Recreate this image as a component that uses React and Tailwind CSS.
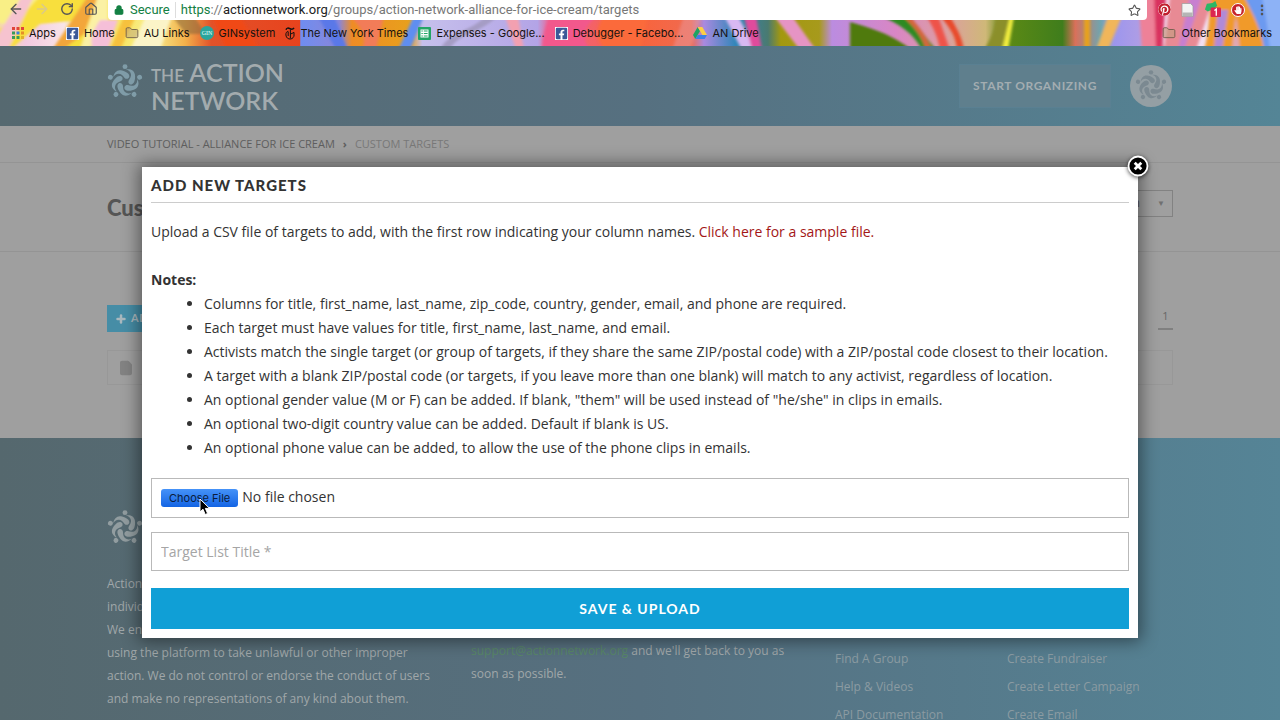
import React from "react";
import { ArrowLeft, ArrowRight, RotateCw, Home, Star, Lock, Folder, EllipsisVertical, Plus, File } from "lucide-react";
import { FaFacebookSquare, FaPinterest, FaHandPaper } from "react-icons/fa";

const FIGURE_ANGLES = [0, 72, 144, 216, 288];

function Swirl({ className }) {
  return (
    <svg viewBox="-19 -19 38 38" className={className} fill="currentColor" aria-hidden="true">
      {FIGURE_ANGLES.map((a) => (
        <g key={a} transform={`rotate(${a})`}>
          <circle cx="0" cy="-16.200" r="2.600" />
          <path d="M-12.300-5C-11.800-9.800-8.500-13-4.500-12.400C-.8-11.900 4.400-9.600 4.600-6.400C4.700-3.600 1.600-2.400-.4-4.300C-2-6-3.400-8.300-6.200-8.600C-9-8.800-11-7.400-12.300-5Z" />
        </g>
      ))}
    </svg>
  );
}

function Logo({ markClass }) {
  return (
    <a href="#home" className="flex items-center gap-2 font-['Lato',sans-serif] text-[#a3abae]">
      <Swirl className={markClass} />
      <span className="flex flex-col text-[25px] font-semibold leading-[25px]">
        <span><span className="text-[17px]">THE</span> ACTION</span>
        <span>NETWORK</span>
      </span>
    </a>
  );
}

function ThemeArt() {
  return (
    <svg className="absolute inset-0 h-full w-full" viewBox="0 0 1280 46" preserveAspectRatio="none" aria-hidden="true">
      <defs>
        <linearGradient id="paint" x1="0" x2="1280" gradientUnits="userSpaceOnUse">
          <stop offset="0" stopColor="#f6d9a8" /><stop offset=".02" stopColor="#f3c9e0" />
          <stop offset=".05" stopColor="#f8e4e8" /><stop offset=".065" stopColor="#f7e23c" />
          <stop offset=".12" stopColor="#f9ec8c" /><stop offset=".145" stopColor="#f3b04a" />
          <stop offset=".165" stopColor="#e2522a" /><stop offset=".234" stopColor="#e8431d" />
          <stop offset=".235" stopColor="#6f8df0" /><stop offset=".265" stopColor="#8a86d8" />
          <stop offset=".275" stopColor="#ef8c25" /><stop offset=".32" stopColor="#e8a01c" />
          <stop offset=".33" stopColor="#c6c0ec" /><stop offset=".42" stopColor="#b3a4e6" />
          <stop offset=".43" stopColor="#f0608c" /><stop offset=".5" stopColor="#f8643c" />
          <stop offset=".54" stopColor="#f06a50" /><stop offset=".55" stopColor="#a98ae0" />
          <stop offset=".575" stopColor="#2f86b8" /><stop offset=".6" stopColor="#4a7a70" />
          <stop offset=".61" stopColor="#a3980f" /><stop offset=".64" stopColor="#a79a1c" />
          <stop offset=".65" stopColor="#bb8ce0" /><stop offset=".7" stopColor="#d986c4" />
          <stop offset=".74" stopColor="#dca0a0" /><stop offset=".77" stopColor="#cfb878" />
          <stop offset=".785" stopColor="#5d8a14" /><stop offset=".83" stopColor="#3f7d1c" />
          <stop offset=".84" stopColor="#d9705a" /><stop offset=".86" stopColor="#6fa5b0" />
          <stop offset=".87" stopColor="#9c96ee" /><stop offset=".9" stopColor="#b7a0e0" />
          <stop offset=".91" stopColor="#f3d9f2" /><stop offset=".945" stopColor="#f2e2f4" />
          <stop offset=".955" stopColor="#e0a030" /><stop offset=".975" stopColor="#e2a080" />
          <stop offset=".99" stopColor="#ec94a4" /><stop offset="1" stopColor="#ee8c9c" />
        </linearGradient>
        <filter id="wet" x="-2%" y="-20%" width="104%" height="140%"><feGaussianBlur stdDeviation="1.500 1" /></filter>
      </defs>
      <rect width="1280" height="46" fill="url(#paint)" />
      <g filter="url(#wet)">
        <path d="M-4-4H108V20L80 50H62L80 20L40 24L10 50H-4V30L14 22L-4 20Z" fill="#f8df3e" />
        <path d="M-4-4H40L12 26L-4 22Z" fill="#f9ef86" />
        <path d="M22-4H34L8 50H-4V38Z" fill="#f6c3cf" />
        <path d="M88-4H98L84 34L62 50H52Z" fill="#f3a63a" />
        <path d="M98-4H108V22L88 50H80Z" fill="#fbf1a4" />
        <path d="M100 20C92 32 90 38 92 50H108L118 20Z" fill="#f5bfd8" />
        <path d="M124 16L110 50H120L136 16Z" fill="#f7c13c" />
        <path d="M146 16L130 50H160L172 16Z" fill="#fbf4c8" />
        <path d="M172 16L194 16L206 34H186Z" fill="#8e6a3c" opacity=".6" />
        <path d="M212 16L226 50H260L240 16Z" fill="#f04a16" />
        <path d="M318 16L336 50H348L334 16Z" fill="#5a78e8" />
        <path d="M350 16C364 30 366 38 362 50H376L384 16Z" fill="#f27b58" />
        <path d="M414 16L398 50H410L424 16Z" fill="#5f8ef0" />
        <path d="M450 50C456 34 480 34 498 16H486C470 32 448 32 440 50Z" fill="#a59cc4" />
        <path d="M505 16L516 50H524L518 16Z" fill="#f3a0b0" />
        <path d="M550 16C544 30 542 38 542 50H590C580 36 584 26 598 16Z" fill="#f2588c" />
        <path d="M604 16C594 30 596 40 606 50H640L648 16Z" fill="#fb6a3a" />
        <path d="M684 16H702L690 50H672Z" fill="#e6a3b0" opacity=".4" />
        <path d="M724 16L742 50H756L738 16Z" fill="#d8b8f2" />
        <path d="M744 16L752 50H762L756 16Z" fill="#e04c9c" />
        <path d="M774 16L800 50H816L792 16Z" fill="#e694c4" />
        <path d="M850 22C880 30 896 38 912 50H850Z" fill="#4f7a10" />
        <path d="M880 16C900 24 914 34 922 50H936L910 16Z" fill="#2f8a22" />
        <path d="M902 16C916 28 922 38 926 50H932C926 34 918 26 910 16Z" fill="#d6663c" />
        <path d="M926 16C934 28 938 38 940 50H950L938 16Z" fill="#ee5348" />
        <path d="M940 16C952 30 956 38 957 50H964C962 36 956 28 950 16Z" fill="#e8492a" />
        <path d="M996 16C994 32 990 40 984 50H1002L1010 16Z" fill="#8b8f2c" />
        <path d="M1010 16L1002 50H1008L1014 16Z" fill="#f4f040" />
        <path d="M1084 16L1084 50H1090L1090 16Z" fill="#e7a01e" />
        <path d="M1108 16L1096 50H1108L1122 16Z" fill="#f1b65a" />
        <path d="M1138-4H1156L1164 50H1142Z" fill="#ee8198" />
        <path d="M1154-4H1166L1162 50H1156Z" fill="#d9335f" />
        <path d="M1170-4H1214L1196 50H1164Z" fill="#e88a94" />
        <path d="M1190-4H1202L1184 50H1178Z" fill="#c77fd0" />
        <path d="M1212-4H1244C1254 16 1262 30 1264 50H1204C1210 30 1208 16 1212-4Z" fill="#f09a2c" />
        <path d="M1218 10L1214 50H1222L1228 10Z" fill="#b08ad8" />
        <path d="M1236 14L1232 50H1240Z" fill="#e0a8b4" />
        <path d="M1244-4H1284V50H1264C1262 30 1254 16 1244-4Z" fill="#6c9af0" />
        <path d="M1262-4C1266 16 1268 30 1270 50H1284V-4Z" fill="#8db2f6" />
      </g>
    </svg>
  );
}

function AppsIcon() {
  const colors = ["#e0443a", "#e0443a", "#e0443a", "#3a9b58", "#3b7ddd", "#e58f2a", "#3a9b58", "#3a9b58", "#e0b12a"];
  return (
    <svg viewBox="0 0 12 12" className="size-3" aria-hidden="true">
      {colors.map((c, i) => (
        <rect key={i} x={(i % 3) * 4.5} y={Math.floor(i / 3) * 4.5} width="3" height="3" fill={c} />
      ))}
    </svg>
  );
}

function GinIcon() {
  return (
    <svg viewBox="0 0 14 14" className="size-[14px]" aria-hidden="true">
      <circle cx="7" cy="7" r="7" fill="#2aa59c" />
      <text x="7" y="9.2" textAnchor="middle" fontSize="6" fontFamily="Liberation Serif, serif" fill="#e8ffff">GIN</text>
    </svg>
  );
}

function TimesIcon() {
  return (
    <svg viewBox="0 0 10 13" className="h-[13px] w-[10px]" fill="none" stroke="#111" aria-hidden="true">
      <path d="M1 2.800C1.600.6 3.400.9 5 1.700S8 2.500 9 .8" strokeWidth="1.500" />
      <path d="M5.400 2.400V11.400M3.200 5V9" strokeWidth="1" />
      <path d="M3.400 4.400C1.400 4.400.8 6 .9 8C1.200 11 3.400 12.200 5.400 12C7.600 11.800 9 10 9 8.400M5.400 7.200L9 5.400V8.600" strokeWidth="1" />
    </svg>
  );
}

function SheetIcon() {
  return (
    <svg viewBox="0 0 13 13" className="size-[13px]" aria-hidden="true">
      <rect width="13" height="13" rx="1" fill="#23a566" />
      <path d="M2.5 2.5h8v8h-8z" fill="#fff" />
      <path d="M3.400 3.600h1.400v1H3.400zM5.800 3.600h3.800v1H5.800zM3.400 6h1.400v1H3.400zM5.800 6h3.800v1H5.800zM3.400 8.400h1.400v1H3.400zM5.800 8.400h3.800v1H5.800z" fill="#23a566" />
    </svg>
  );
}

function DriveIcon() {
  return (
    <svg viewBox="0 0 14 12" className="h-3 w-[14px]" aria-hidden="true">
      <path d="M4.700 0L0 8L2.300 12L7 4z" fill="#1da362" />
      <path d="M4.700 0H9.300L14 8H9.400z" fill="#fdcf46" />
      <path d="M4.700 8H14L11.700 12H2.300z" fill="#3f7fe8" />
    </svg>
  );
}

function Bookmark({ icon, children }) {
  return (
    <a href="#bookmark" className="flex shrink-0 items-center gap-[5px] whitespace-nowrap">
      {icon}
      <span>{children}</span>
    </a>
  );
}

function BrowserBar() {
  const fb = <FaFacebookSquare className="size-[13px] bg-white text-[#3b5998]" />;
  const folder = <Folder className="size-[14px] text-[#6b5a48]" fill="#b9a37c" fillOpacity="0.5" strokeWidth={1.5} />;
  return (
    <header className="relative shrink-0 font-['Inter',sans-serif]">
      <ThemeArt />
      <div className="relative flex h-5 items-start">
        <nav className="flex w-[108px] shrink-0 gap-[10px] pt-px pl-2 text-[#555]">
          <button aria-label="Back"><ArrowLeft className="size-4" strokeWidth={2} /></button>
          <button aria-label="Forward"><ArrowRight className="size-4 text-[#d9c98c]" strokeWidth={2} /></button>
          <button aria-label="Reload"><RotateCw className="size-[14px]" strokeWidth={2.4} /></button>
          <button aria-label="Home page"><Home className="size-[14px]" strokeWidth={2} /></button>
        </nav>
        <div className="flex h-5 min-w-0 flex-1 items-center rounded-b bg-white pr-[6px] pl-[6px] font-['Roboto',sans-serif] text-[13px] text-[#777]">
          <Lock className="size-[10px] text-[#138043]" fill="currentColor" strokeWidth={3} />
          <span className="ml-[6px] text-[#138043]">Secure</span>
          <span className="mx-[5px] h-4 w-px bg-[#ddd]" />
          <span className="flex-1 truncate">
            <span className="text-[#138043]">https</span>://<span className="text-[#222]">actionnetwork.org</span>/groups/action-network-alliance-for-ice-cream/targets
          </span>
          <button aria-label="Bookmark this page"><Star className="size-[13px] text-[#555]" strokeWidth={2} /></button>
        </div>
        <div className="flex w-[133px] shrink-0 items-center gap-[10px] pt-px pl-[11px]">
          <FaPinterest className="size-[13px] rounded-full bg-white text-[#c01f2e]" />
          <svg viewBox="0 0 13 14" className="h-[14px] w-[13px]" aria-hidden="true">
            <path d="M1 .5h8.500L12 3v10.500H1z" fill="#f3f3f3" stroke="#999" strokeWidth=".7" /><path d="M1.500 9.500h10v3.500h-10z" fill="#b5b5b5" />
          </svg>
          <svg viewBox="0 0 18 18" className="size-[17px]" aria-hidden="true">
            <path d="M1 9L3 3L9 2L12 0L14 5L11 8L4 11z" fill="#2bb765" />
            <rect x="7" y="7" width="11" height="10" rx="1" fill="#dc2650" />
            <path d="M11 10l2-1.400v7" stroke="#fff" strokeWidth="1.400" fill="none" />
          </svg>
          <span className="flex size-[14px] items-center justify-center rounded-full border border-white bg-[#c6232c]">
            <FaHandPaper className="size-2 text-white" />
          </span>
          <EllipsisVertical className="size-[14px] text-[#555]" strokeWidth={2.5} />
        </div>
      </div>
      <nav className="relative flex h-[26px] items-center pr-2 pl-3 text-[11px] text-[#16120f]">
        <div className="flex flex-1 items-center gap-[10px]">
          <Bookmark icon={<AppsIcon />}>Apps</Bookmark>
          <Bookmark icon={fb}>Home</Bookmark>
          <Bookmark icon={folder}>AU Links</Bookmark>
          <Bookmark icon={<GinIcon />}>GINsystem</Bookmark>
          <Bookmark icon={<TimesIcon />}>The New York Times</Bookmark>
          <Bookmark icon={<SheetIcon />}>Expenses - Google...</Bookmark>
          <Bookmark icon={fb}>Debugger - Facebo...</Bookmark>
          <Bookmark icon={<DriveIcon />}>AN Drive</Bookmark>
        </div>
        <Bookmark icon={folder}>Other Bookmarks</Bookmark>
      </nav>
    </header>
  );
}

const WRAP = "mx-auto w-full max-w-[1066px]";

function SitePage() {
  return (
    <>
      <div className="shrink-0 bg-linear-to-r from-[#566970] via-[#567080] to-[#548596]">
        <div className={`${WRAP} flex h-20 items-center justify-between`}>
          <Logo markClass="-mt-2 size-9 text-[#7f9ca8]" />
          <div className="flex items-center gap-[19px] pr-px">
            <a href="#start" className="border border-[#5a8092] bg-[#5f7f8d] px-[13px] py-[11px] font-['Lato',sans-serif] text-[12px] font-bold leading-5 tracking-wider text-[#a3adb1]">START ORGANIZING</a>
            <a href="#account" aria-label="Account" className="flex size-[42px] items-center justify-center rounded-full bg-[#949fa4] text-[#7b8991]">
              <Swirl className="size-8" />
            </a>
          </div>
        </div>
      </div>

      <main className="shrink-0 bg-[#9f9f9f]">
        <nav className="border-b border-[#949494]">
          <div className={`${WRAP} flex h-9 items-center gap-2 text-[11px] text-[#5e5e5e]`}>
            <a href="#group">VIDEO TUTORIAL - ALLIANCE FOR ICE CREAM</a>
            <span className="font-bold">›</span>
            <span className="text-[#787878]">CUSTOM TARGETS</span>
          </div>
        </nav>
        <div className="border-b border-[#949494]">
          <div className={`${WRAP} flex h-[88px] items-center justify-between`}>
            <h1 className="font-['Lato',sans-serif] text-[22px] font-black text-[#555]">Custom Targets</h1>
            <div className="relative -mt-2">
              <select aria-label="Actions" className="h-[27px] w-36 appearance-none border border-[#828282] pr-8 text-right text-[13px] text-[#555]">
                <option>Action</option>
              </select>
              <span className="pointer-events-none absolute top-2 right-2 text-[8px] text-[#707070]">▼</span>
            </div>
          </div>
        </div>
        <div className={`${WRAP} h-[186px] pt-[53px]`}>
          <div className="flex items-center justify-between">
            <button className="flex h-[27px] items-center gap-1 bg-[#468da6] px-2 font-['Lato',sans-serif] text-[11px] font-bold tracking-wider text-[#a9b8be]">
              <Plus className="size-3" strokeWidth={5} />ADD TARGETS
            </button>
            <span className="w-[15px] border-b-2 border-[#808080] pb-1 text-center text-[11px] leading-4 text-[#666]">1</span>
          </div>
          <div className="mt-[18px] flex h-[35px] items-center border border-[#989898] pl-[10px]">
            <File className="size-4 text-[#838383]" fill="currentColor" />
          </div>
        </div>
      </main>

      <footer className="flex-1 bg-linear-to-r from-[#55686e] via-[#567080] to-[#558496] text-[12px] leading-[23px] text-[#a0a7a9]">
        <div className={`${WRAP} flex pt-[63px]`}>
          <div className="w-[364px] pr-6">
            <Logo markClass="size-9 text-[#929da0]" />
            <p className="mt-[18px]">
              Action Network is an open platform that empowers<br />
              individuals and groups to organize for progressive causes.<br />
              We encourage responsible activism, and do not support<br />
              using the platform to take unlawful or other improper<br />
              action. We do not control or endorse the conduct of users<br />
              and make no representations of any kind about them.
            </p>
          </div>
          <div className="w-[364px] pt-[138px] pr-8">
            <a href="#support" className="text-[#588667]">support@actionnetwork.org</a> and we'll get back to you as<br />soon as possible.
          </div>
          <ul className="w-[172px] pt-[144px] leading-7 text-[#8b9ba2]">
            <li><a href="#find">Find A Group</a></li>
            <li><a href="#help">Help &amp; Videos</a></li>
            <li><a href="#api">API Documentation</a></li>
          </ul>
          <ul className="pt-[144px] leading-7 text-[#8b9ba2]">
            <li><a href="#fundraiser">Create Fundraiser</a></li>
            <li><a href="#letter">Create Letter Campaign</a></li>
            <li><a href="#email">Create Email</a></li>
          </ul>
        </div>
      </footer>
    </>
  );
}

const NOTES = [
  "Columns for title, first_name, last_name, zip_code, country, gender, email, and phone are required.",
  "Each target must have values for title, first_name, last_name, and email.",
  "Activists match the single target (or group of targets, if they share the same ZIP/postal code) with a ZIP/postal code closest to their location.",
  "A target with a blank ZIP/postal code (or targets, if you leave more than one blank) will match to any activist, regardless of location.",
  "An optional gender value (M or F) can be added. If blank, \"them\" will be used instead of \"he/she\" in clips in emails.",
  "An optional two-digit country value can be added. Default if blank is US.",
  "An optional phone value can be added, to allow the use of the phone clips in emails.",
];

function TargetsDialog() {
  return (
    <div className="absolute inset-x-0 top-[167px] flex justify-center">
      <form role="dialog" aria-labelledby="dialog-title" onSubmit={(e) => e.preventDefault()} className="relative w-[996px] bg-white px-[9px] pb-[9px] text-[14px] leading-6 text-[#333] shadow-[0_0_16px_3px_rgba(0,0,0,0.45)]">
        <h2 id="dialog-title" className="flex h-9 items-center border-b border-[#ccc] font-['Lato',sans-serif] text-[15px] font-black tracking-[1px]">ADD NEW TARGETS</h2>
        <p className="mt-[17px]">
          Upload a CSV file of targets to add, with the first row indicating your column names. <a href="#sample" className="text-[#a31717]">Click here for a sample file.</a>
        </p>
        <p className="mt-6 font-bold">Notes:</p>
        <ul className="list-disc pl-[53px]">
          {NOTES.map((note) => <li key={note}>{note}</li>)}
        </ul>
        <div className="relative mt-[18px]">
          <input type="file" aria-label="Target file" className="block h-10 w-full border border-[#b9b9b9] px-[9px] pt-[6px] leading-6 file:mr-1 file:h-[18px] file:rounded-[3px] file:bg-linear-to-b file:from-[#4592f8] file:to-[#1264e4] file:px-2 file:font-['Inter',sans-serif] file:text-[11px] file:leading-[18px] file:text-[#0a1c3c]" />
          <svg viewBox="0 0 12 18" className="pointer-events-none absolute top-5 left-12 h-[18px] w-3" aria-hidden="true">
            <path d="M1 1V14L4 11.200L6.200 16.500L8.600 15.500L6.400 10.400H10.600Z" fill="#000" stroke="#fff" strokeWidth="1" />
          </svg>
        </div>
        <input type="text" aria-label="Target List Title" placeholder="Target List Title *" className="mt-[14px] block h-[39px] w-full border border-[#b9b9b9] px-[9px] placeholder:text-[#a5a5a5]" />
        <button type="submit" className="mt-[17px] block h-[41px] w-full bg-[#109fd6] font-['Lato',sans-serif] text-[14px] font-bold tracking-[1px] text-white">SAVE &amp; UPLOAD</button>
        <button type="button" aria-label="Close" className="absolute -top-3 -right-[11px] rounded-full">
          <svg viewBox="0 0 22 22" className="size-[22px] drop-shadow-[0_1px_2px_rgba(0,0,0,0.7)]" aria-hidden="true">
            <circle cx="11" cy="11" r="9.500" fill="#000" stroke="#fff" strokeWidth="1.800" />
            <path d="M7.700 7.700l6.600 6.600M14.300 7.700l-6.600 6.600" stroke="#fff" strokeWidth="2.800" />
          </svg>
        </button>
      </form>
    </div>
  );
}

export default function App() {
  return (
    <div className="relative flex h-screen flex-col overflow-hidden font-['Open_Sans',sans-serif]">
      <BrowserBar />
      <SitePage />
      <TargetsDialog />
    </div>
  );
}
